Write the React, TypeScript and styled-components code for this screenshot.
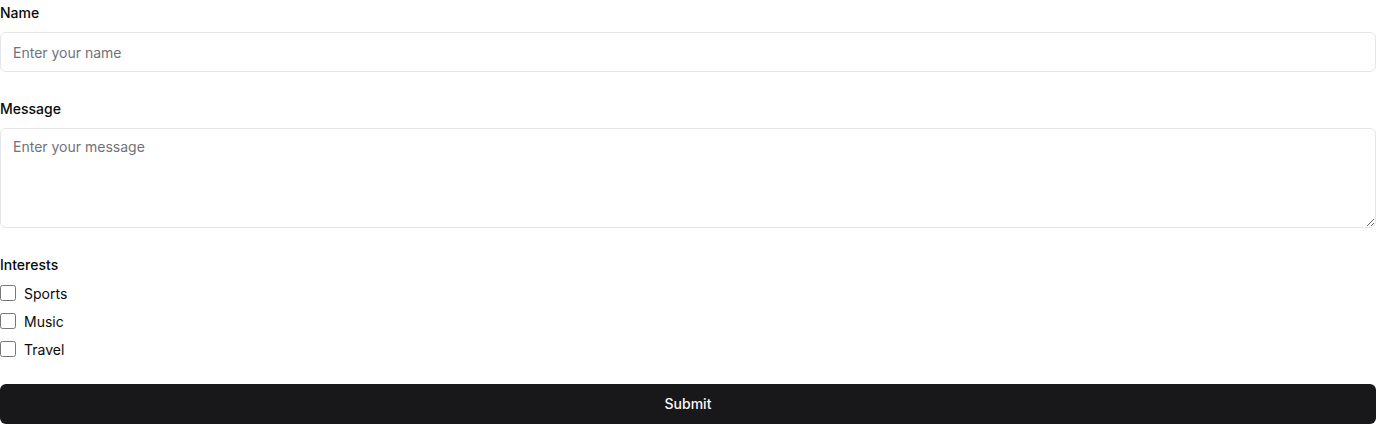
import React from "react";
import styled, { createGlobalStyle } from "styled-components";

const Global = createGlobalStyle`
  * { box-sizing: border-box; }
  html, body { margin: 0; padding: 0; background: #ffffff; }
  body { font-family: Inter, "Liberation Sans", sans-serif; color: #09090b; }
`;

const Form = styled.form`
  display: flex;
  flex-direction: column;
  width: 1376px;
`;

const Field = styled.div`
  display: flex;
  flex-direction: column;
  margin-bottom: 24px;
`;

const Label = styled.label`
  font-size: 14px;
  font-weight: 500;
  line-height: 24px;
  padding-top: 1px;
  margin-bottom: 7px;
`;

const GroupLabel = styled.span`
  font-size: 14px;
  font-weight: 500;
  line-height: 24px;
  padding-top: 1px;
  margin-bottom: 3px;
`;

const Input = styled.input`
  height: 40px;
  width: 100%;
  border: 1px solid #e4e4e7;
  border-radius: 6px;
  padding: 8px 12px;
  font-family: inherit;
  font-size: 14px;
  color: #09090b;
  background: #fff;
  outline: none;
  &::placeholder { color: #71717a; }
`;

const TextArea = styled.textarea`
  height: 100px;
  width: 100%;
  border: 1px solid #e4e4e7;
  border-radius: 6px;
  padding: 8px 12px;
  font-family: inherit;
  font-size: 14px;
  line-height: 20px;
  color: #09090b;
  background: #fff;
  outline: none;
  resize: vertical;
  display: block;
  &::placeholder { color: #71717a; }
`;

const CheckList = styled.div`
  display: flex;
  flex-direction: column;
  gap: 4px;
`;

const CheckRow = styled.label`
  display: flex;
  align-items: center;
  gap: 8px;
  height: 24px;
  padding-top: 2px;
  font-size: 14px;
`;

const Check = styled.input`
  width: 16px;
  height: 16px;
  margin: 0;
`;

const Submit = styled.button`
  height: 40px;
  width: 100%;
  border: none;
  border-radius: 6px;
  padding: 0 0 2px;
  background: #18181b;
  color: #fafafa;
  font-family: inherit;
  font-size: 14px;
  font-weight: 500;
  cursor: pointer;
`;

export default function App() {
  return (
    <>
      <Global />
      <Form onSubmit={(e) => e.preventDefault()}>
        <Field>
          <Label htmlFor="name">Name</Label>
          <Input id="name" placeholder="Enter your name" />
        </Field>
        <Field>
          <Label htmlFor="message">Message</Label>
          <TextArea id="message" placeholder="Enter your message" />
        </Field>
        <Field>
          <GroupLabel>Interests</GroupLabel>
          <CheckList>
            {["Sports", "Music", "Travel"].map((x) => (
              <CheckRow key={x}>
                <Check type="checkbox" />
                {x}
              </CheckRow>
            ))}
          </CheckList>
        </Field>
        <Submit type="submit">Submit</Submit>
      </Form>
    </>
  );
}
